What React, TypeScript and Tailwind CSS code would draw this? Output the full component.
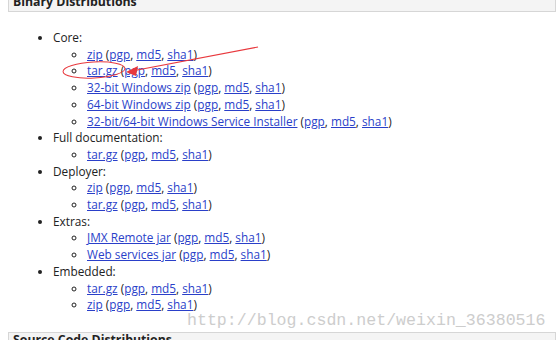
const links = (
  <>
    {' ('}
    <a href="#" className="text-[#2a3fc9] underline">pgp</a>
    {', '}
    <a href="#" className="text-[#2a3fc9] underline">md5</a>
    {', '}
    <a href="#" className="text-[#2a3fc9] underline">sha1</a>
    {')'}
  </>
);

const groups: { title: string; items: string[] }[] = [
  {
    title: 'Core:',
    items: ['zip', 'tar.gz', '32-bit Windows zip', '64-bit Windows zip', '32-bit/64-bit Windows Service Installer'],
  },
  { title: 'Full documentation:', items: ['tar.gz'] },
  { title: 'Deployer:', items: ['zip', 'tar.gz'] },
  { title: 'Extras:', items: ['JMX Remote jar', 'Web services jar'] },
  { title: 'Embedded:', items: ['tar.gz', 'zip'] },
];

export default function App() {
  return (
    <div
      className="relative w-[558px] h-[340px] overflow-hidden bg-white text-[#222] text-[11.8px] leading-[16.7px]"
      style={{ fontFamily: '"Open Sans", "Noto Sans", sans-serif' }}
    >
      <div className="ml-[8px] mr-[2px] mt-[-11px] h-[23px] border border-[#d6d6d6] bg-[#f4f4f4] pl-[4px] pt-[5px] font-bold text-[12.3px] leading-[13px] text-[#222]">
        Binary Distributions
      </div>

      <ul className="list-disc ml-[53px] mt-[17px]">
        {groups.map((g) => (
          <li key={g.title}>
            {g.title}
            <ul className="list-[circle] pl-[34px]">
              {g.items.map((it, i) => (
                <li key={i}>
                  <a href="#" className="text-[#2a3fc9] underline">{it}</a>
                  {links}
                </li>
              ))}
            </ul>
          </li>
        ))}
      </ul>

      <div
        className="absolute left-[187px] top-[311px] text-[16.6px] leading-[20px] text-[#cdcdcd] whitespace-nowrap"
        style={{ fontFamily: '"Liberation Mono", monospace' }}
      >
        http://blog.csdn.net/weixin_36380516
      </div>

      <div className="absolute left-[8px] right-[2px] top-[332px] h-[24px] border border-[#d6d6d6] bg-[#f4f4f4] pl-[4px] font-bold text-[12.3px] leading-[13px] text-[#222]">
        Source Code Distributions
      </div>

      <svg className="absolute left-0 top-0" width="558" height="340" viewBox="0 0 558 340">
        <ellipse cx="94" cy="70" rx="31" ry="8" fill="none" stroke="#e8383d" strokeWidth="1" transform="rotate(-3 94 70)" />
        <line x1="258" y1="47" x2="132" y2="71" stroke="#e8383d" strokeWidth="1.2" />
        <polygon points="126,72 138,66 136,76" fill="#e8383d" />
      </svg>
    </div>
  );
}
